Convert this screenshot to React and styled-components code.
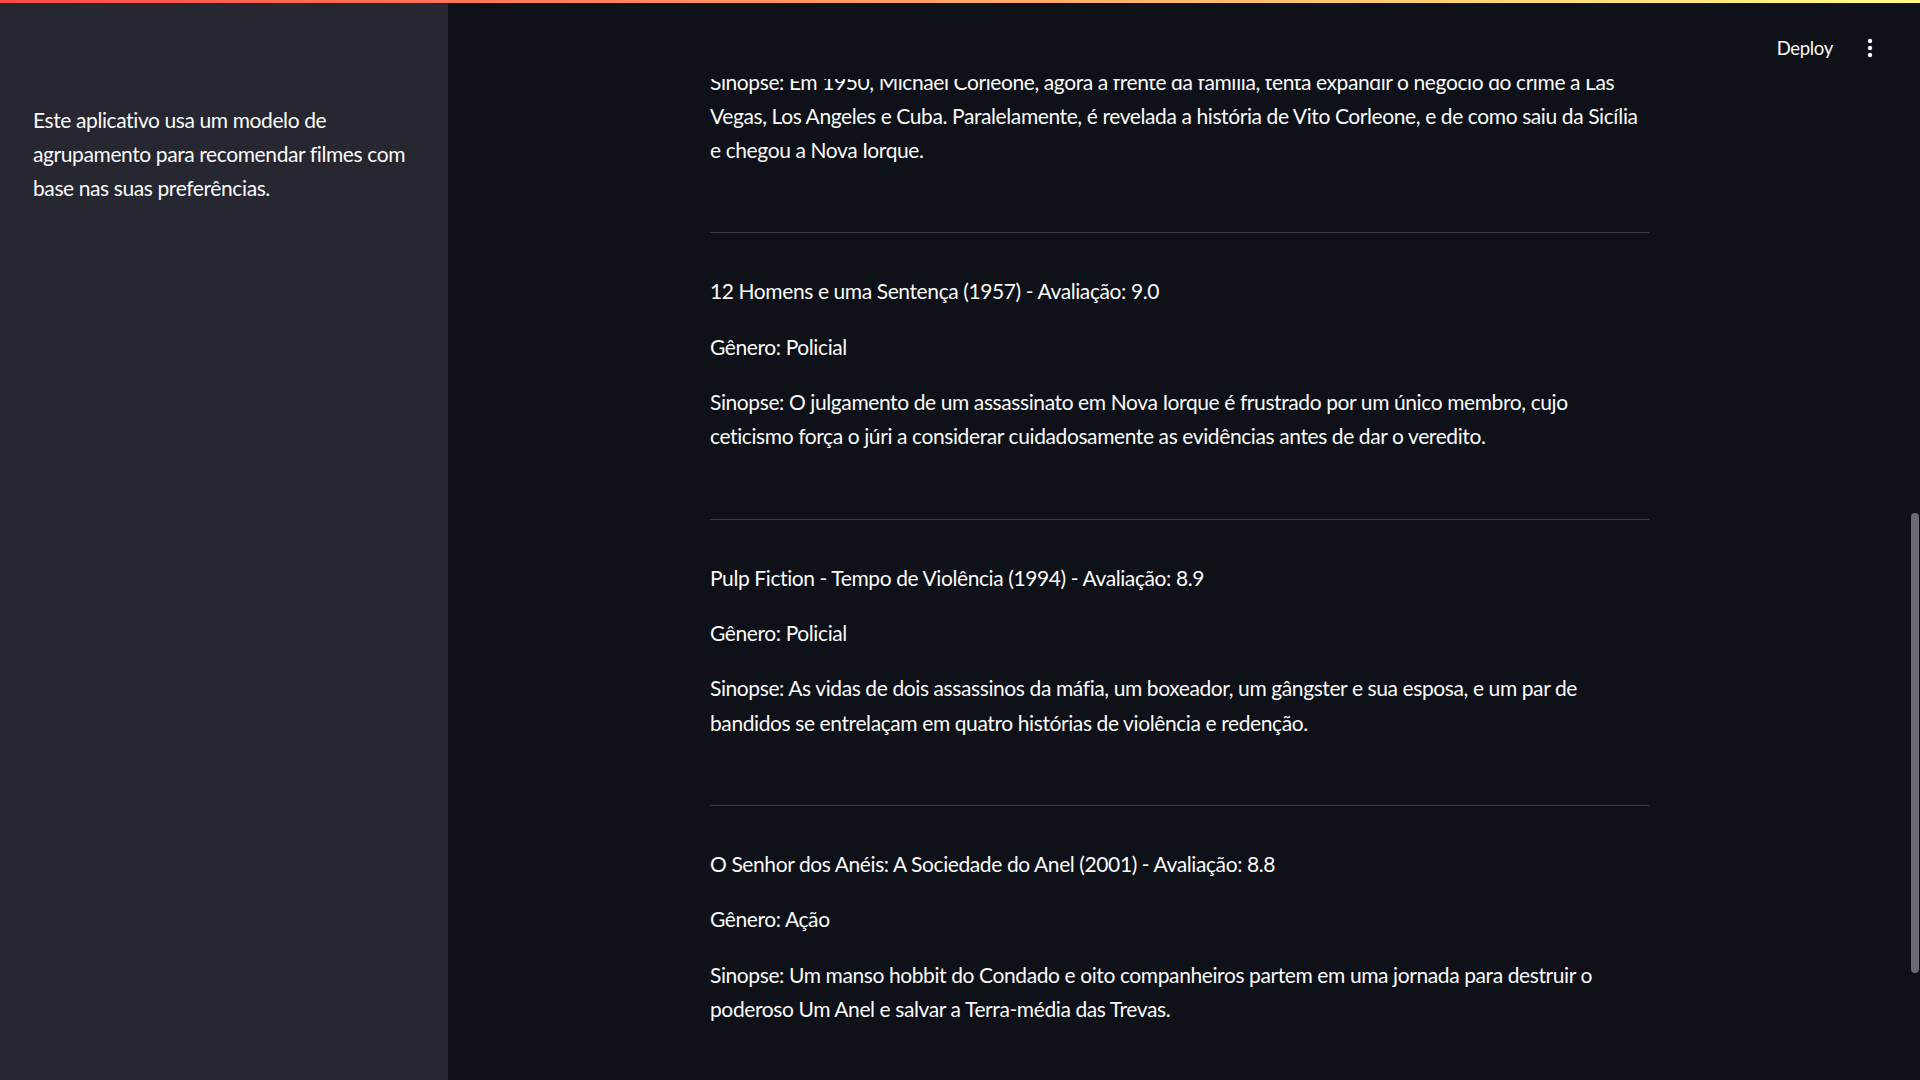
import React from "react";
import styled, { createGlobalStyle } from "styled-components";

const GlobalStyle = createGlobalStyle`
  html, body {
    margin: 0;
    padding: 0;
    background: #0e1117;
    overflow: hidden;
  }
  * { box-sizing: border-box; }
`;

const FONT = `Lato, "Noto Sans", "Liberation Sans", sans-serif`;

const Shell = styled.div`
  position: relative;
  display: flex;
  width: 100vw;
  height: 100vh;
  background: #0e1117;
  color: #fafafa;
  font-family: ${FONT};
`;

const TopGradient = styled.div`
  position: absolute;
  top: 0;
  left: 0;
  right: 0;
  height: 3px;
  z-index: 10;
  background: linear-gradient(90deg, rgb(255, 75, 75), rgb(255, 253, 128));
`;

const Sidebar = styled.aside`
  flex: 0 0 448px;
  background: #262730;
  padding: 103px 32px 0 33px;
`;

const SideText = styled.p`
  margin: 0;
  font-size: 21px;
  line-height: 34.13px;
  letter-spacing: -0.4px;
  color: #fafafa;
  white-space: nowrap;
`;

const Main = styled.main`
  position: relative;
  flex: 1;
  overflow: hidden;
`;

const Header = styled.header`
  position: absolute;
  top: 0;
  left: 0;
  right: 0;
  height: 79px;
  background: #0e1117;
  z-index: 5;
  display: flex;
  justify-content: flex-end;
  align-items: flex-start;
  padding: 36px 40px 0 0;
  gap: 27px;
`;

const DeployButton = styled.span`
  font-size: 18.5px;
  line-height: 24px;
  letter-spacing: -0.3px;
  color: #fafafa;
  font-family: ${FONT};
`;

const KebabIcon = styled.svg`
  width: 20px;
  height: 24px;
  display: block;
`;

const Content = styled.div`
  width: 939px;
  margin-left: 262px;
  padding-top: 65px;
  display: flex;
  flex-direction: column;
`;

const Entry = styled.section`
  display: flex;
  flex-direction: column;
  gap: 21.33px;
`;

const Para = styled.p`
  margin: 0;
  font-size: 21px;
  line-height: 34.13px;
  letter-spacing: -0.4px;
  color: #fafafa;
  white-space: nowrap;
`;

const Divider = styled.hr`
  margin: 65px 0 41px;
  border: none;
  height: 1px;
  background: #3b3d44;
`;

const ScrollThumb = styled.div`
  position: absolute;
  right: 1px;
  top: 513px;
  width: 8px;
  height: 460px;
  border-radius: 4px;
  background: #6b6c71;
  z-index: 6;
`;

const Lines = ({ lines }) => (
  <Para>
    {lines.map((l, i) => (
      <React.Fragment key={i}>
        {l}
        {i < lines.length - 1 && <br />}
      </React.Fragment>
    ))}
  </Para>
);

const movies = [
  {
    title: "12 Homens e uma Sentença (1957) - Avaliação: 9.0",
    genre: "Gênero: Policial",
    synopsis: [
      "Sinopse: O julgamento de um assassinato em Nova Iorque é frustrado por um único membro, cujo",
      "ceticismo força o júri a considerar cuidadosamente as evidências antes de dar o veredito.",
    ],
  },
  {
    title: "Pulp Fiction - Tempo de Violência (1994) - Avaliação: 8.9",
    genre: "Gênero: Policial",
    synopsis: [
      "Sinopse: As vidas de dois assassinos da máfia, um boxeador, um gângster e sua esposa, e um par de",
      "bandidos se entrelaçam em quatro histórias de violência e redenção.",
    ],
  },
  {
    title: "O Senhor dos Anéis: A Sociedade do Anel (2001) - Avaliação: 8.8",
    genre: "Gênero: Ação",
    synopsis: [
      "Sinopse: Um manso hobbit do Condado e oito companheiros partem em uma jornada para destruir o",
      "poderoso Um Anel e salvar a Terra-média das Trevas.",
    ],
  },
];

export default function App() {
  return (
    <>
      <GlobalStyle />
      <Shell>
        <TopGradient />
        <Sidebar>
          <SideText>
            Este aplicativo usa um modelo de
            <br />
            agrupamento para recomendar filmes com
            <br />
            base nas suas preferências.
          </SideText>
        </Sidebar>
        <Main>
          <Header>
            <DeployButton>Deploy</DeployButton>
            <KebabIcon viewBox="0 0 20 24">
              <circle cx="10" cy="5" r="2.2" fill="#fafafa" />
              <circle cx="10" cy="12" r="2.2" fill="#fafafa" />
              <circle cx="10" cy="19" r="2.2" fill="#fafafa" />
            </KebabIcon>
          </Header>
          <Content>
            <Entry>
              <Lines
                lines={[
                  "Sinopse: Em 1950, Michael Corleone, agora a frente da família, tenta expandir o negócio do crime a Las",
                  "Vegas, Los Angeles e Cuba. Paralelamente, é revelada a história de Vito Corleone, e de como saiu da Sicília",
                  "e chegou a Nova Iorque.",
                ]}
              />
            </Entry>
            {movies.map((m) => (
              <React.Fragment key={m.title}>
                <Divider />
                <Entry>
                  <Para>{m.title}</Para>
                  <Para>{m.genre}</Para>
                  <Lines lines={m.synopsis} />
                </Entry>
              </React.Fragment>
            ))}
          </Content>
          <ScrollThumb />
        </Main>
      </Shell>
    </>
  );
}
